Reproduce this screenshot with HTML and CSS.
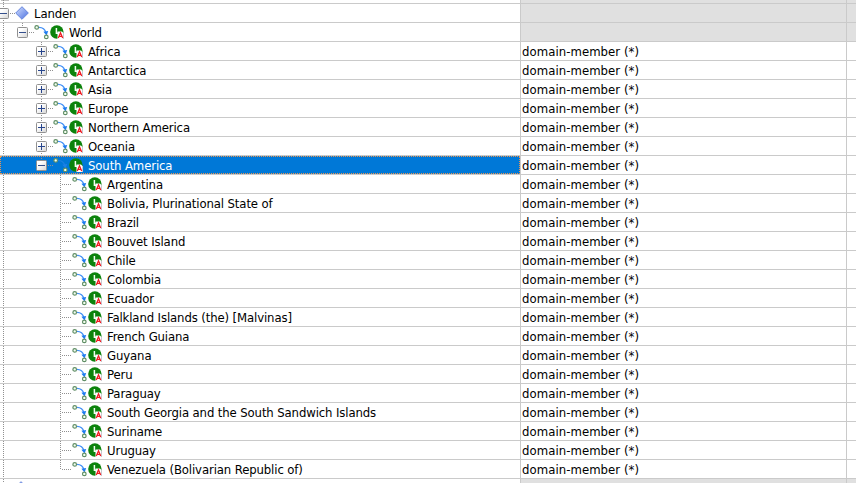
FILE: index.html
```html
<!DOCTYPE html>
<html lang="en">
<head>
<meta charset="utf-8">
<title>Landen</title>
<link rel="stylesheet" href="styles.css">
</head>
<body>
<svg class="defs" width="0" height="0" aria-hidden="true">
  <defs>
    <linearGradient id="boxfill" x1="0" y1="0" x2="1" y2="1"><stop offset=".3" stop-color="#fff"/><stop offset="1" stop-color="#d4d4d4"/></linearGradient>
    <linearGradient id="gem" x1="0" y1="0" x2="1" y2="1"><stop offset="0" stop-color="#d5e0ff"/><stop offset="1" stop-color="#4a70e0"/></linearGradient>
    <symbol id="minus" viewBox="0 0 11 11"><rect x=".5" y=".5" width="10" height="10" rx="1" fill="url(#boxfill)" stroke="#919191"/><path d="M2 5.5h7" stroke="#344f8c"/></symbol>
    <symbol id="plus" viewBox="0 0 11 11"><rect x=".5" y=".5" width="10" height="10" rx="1" fill="url(#boxfill)" stroke="#919191"/><path d="M2 5.5h7M5.5 2v7" stroke="#27458c"/></symbol>
    <symbol id="diamond" viewBox="0 0 14 14"><path d="M7 .7 13.3 7 7 13.3.7 7Z" fill="url(#gem)" stroke="#6484dc"/></symbol>
    <symbol id="member" viewBox="0 0 31 16">
      <path class="arc" d="M5 3.4C8.5 3.5 11 5.2 11.8 8.5" fill="none" stroke-width="1.3"/>
      <path class="tip" d="M9.4 7.7 14.2 7 12.6 11.4Z"/>
      <circle cx="2.7" cy="3.4" r="1.8" fill="#f5fff0" stroke="#5f8d65" stroke-width="1.2"/>
      <circle cx="12.3" cy="12.9" r="1.8" fill="#f5fff0" stroke="#5f8d65" stroke-width="1.2"/>
      <circle cx="22.9" cy="8" r="6.7" fill="#0c830c"/>
      <path d="M22.4 4v5.3h2" fill="none" stroke="#f1fff0" stroke-width="1.5"/>
      <path d="M23.5 7.5H28l2 2V15h-6.5Z" fill="#fff"/><path d="M29.5 9v6" stroke="#c8c8d0"/>
      <path d="m24.3 14 2.2-5.2 2.2 5.2M25.1 12.3h2.8" fill="none" stroke="#f01820" stroke-width="1.25"/>
    </symbol>
  </defs>
</svg>
<main class="grid" id="grid"></main>
<script src="tree.js"></script>
</body>
</html>
```
FILE: styles.css
```css
* { box-sizing: border-box; }
body { margin: 0; background: #fff; overflow: hidden; }
.defs { position: absolute; }
.grid {
  width: 856px; height: 483px; overflow: hidden;
  font: 13px/20px "Tahoma", "DejaVu Sans Condensed", sans-serif;
  color: #000;
  --arc: #4390f5; --tip: #1e7cf0;
}
.row { display: grid; grid-template-columns: 520px 326px 10px; grid-template-rows: 100%; height: 19px; }
.row.edge-top { height: 4px; }
.edge-mark { width: 8px; height: 1px; margin-left: 1px; align-self: flex-start; background: #c4c4c4; }
.cell { display: flex; align-items: flex-start; border-left: 1px solid #cacaca; border-bottom: 1px solid #cacaca; white-space: pre; padding-left: 1px; overflow: hidden; }
.shade .cell { background: #e0e0e0; }
.name { position: relative; display: flex; align-items: center; border-bottom: 1px solid #cacaca; overflow: hidden; white-space: pre; }
.label { align-self: flex-start; letter-spacing: -.12px; }
.value { letter-spacing: .06px; }
.level1 { padding-left: 17px; }
.level2 { padding-left: 36px; }
.level3 { padding-left: 56px; }
.box { width: 11px; height: 11px; flex: none; position: relative; }
.level0 .box { margin-left: -2px; }
.link { height: 1px; width: 5px; margin-left: 1px; flex: none; background: repeating-linear-gradient(90deg, #909090 0 1px, transparent 1px 2px); }
.level3 .link { width: 10px; margin-left: 6px; }
.member { width: 31px; height: 16px; margin: 0 4px 0 0; flex: none; }
.arc { stroke: var(--arc); }
.tip { fill: var(--tip); }
.diamond { width: 14px; height: 14px; margin-right: 5px; flex: none; }
.next-diamond { margin-left: 14px; }
.guide { position: absolute; top: 0; width: 1px; height: 18px; background: repeating-linear-gradient(#909090 0 1px, transparent 1px 2px); }
.g0 { left: 3px; } .g1 { left: 22px; } .g2 { left: 41px; } .g3 { left: 60px; }
.half { height: 9px; }
.selected { --arc: #1980e2; --tip: #1c80e8; }
.selected .name { background: #0078d7; color: #fff; }
.selected .name::after { content: ""; position: absolute; inset: 0; border: 1px dotted #e99552; }
```
FILE: tree.js
```js
const rows = [
  [0, "Landen"], [1, "World"],
  ...["Africa", "Antarctica", "Asia", "Europe", "Northern America", "Oceania", "South America"].map(n => [2, n]),
  ...["Argentina", "Bolivia, Plurinational State of", "Brazil", "Bouvet Island", "Chile", "Colombia", "Ecuador",
    "Falkland Islands (the) [Malvinas]", "French Guiana", "Guyana", "Peru", "Paraguay",
    "South Georgia and the South Sandwich Islands", "Suriname", "Uruguay", "Venezuela (Bolivarian Republic of)"].map(n => [3, n])
];
const icon = (id, cls) => `<svg class="${cls}"><use href="#${id}"/></svg>`;
const cells = text => `<div class="cell"><span class="value">${text}</span></div><div class="cell"></div>`;
let html = `<div class="row edge-top shade"><div class="name"><i class="guide g0"></i><i class="edge-mark"></i></div>${cells("")}</div>`;
rows.forEach(([level, name], i) => {
  const selected = name === "South America";
  let guides = selected ? "" : '<i class="guide g0"></i>';
  if (level === 1) guides += '<i class="guide g1 half"></i>';
  if (level === 2) guides += `<i class="guide g2 ${selected ? "half" : ""}"></i>`;
  if (level === 3) guides += `<i class="guide g3 ${i === rows.length - 1 ? "half" : ""}"></i>`;
  const box = level === 3 ? "" : icon(level < 2 || selected ? "minus" : "plus", "box");
  html += `<div class="row ${level < 2 ? "shade" : ""} ${selected ? "selected" : ""}"><div class="name level${level}">${guides}${box}<i class="link"></i>${level ? icon("member", "member") : icon("diamond", "diamond")}<span class="label">${name}</span></div>${cells(level > 1 ? "domain-member (*)" : "")}</div>`;
});
html += `<div class="row shade"><div class="name level0"><i class="guide g0"></i>${icon("diamond", "diamond next-diamond")}</div>${cells("")}</div>`;
document.getElementById("grid").innerHTML = html;
```
